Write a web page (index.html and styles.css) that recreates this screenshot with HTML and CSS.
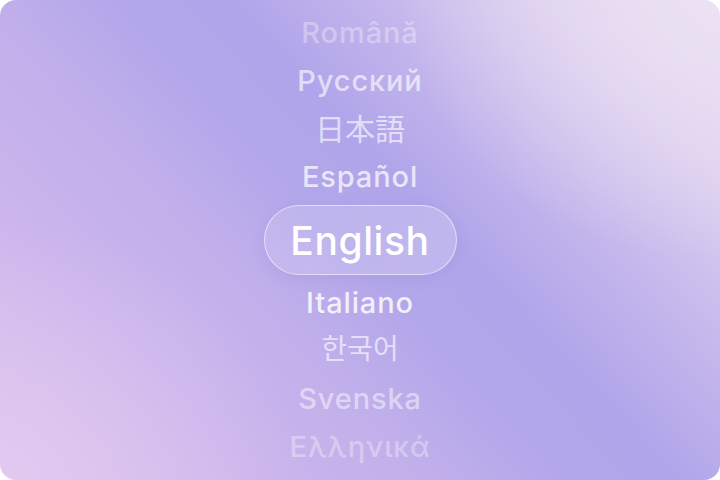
FILE: index.html
```html
<!DOCTYPE html>
<html lang="en">
<head>
<meta charset="utf-8">
<title>Language picker</title>
<link rel="stylesheet" href="styles.css">
</head>
<body>
<main class="card">
  <ul class="langs">
    <li class="lang o1">Română</li>
    <li class="lang o3">Русский</li>
    <li class="lang o3 cjk jp">日本語</li>
    <li class="lang o4">Español</li>
    <li class="lang current"><span class="pill">English</span></li>
    <li class="lang o5">Italiano</li>
    <li class="lang o3 cjk kr">한국어</li>
    <li class="lang o2">Svenska</li>
    <li class="lang o1">Ελληνικά</li>
  </ul>
</main>
</body>
</html>
```

FILE: styles.css
```css
* { box-sizing: border-box; }
html, body { margin: 0; padding: 0; background: #ffffff; }
body { width: 720px; height: 480px; overflow: hidden; }

.card {
  width: 720px;
  height: 480px;
  border-radius: 16px;
  overflow: hidden;
  display: flex;
  align-items: center;
  justify-content: center;
  background:
    radial-gradient(ellipse 320px 260px at 100% 0%, rgba(236,226,243,0.9), rgba(236,226,243,0) 100%),
    radial-gradient(ellipse 300px 260px at 0% 100%, rgba(226,202,240,0.85), rgba(226,202,240,0) 100%),
    linear-gradient(47deg, #dcc2ee 0%, #cbb5ec 22%, #c2b0eb 36%, #b3a7ea 48%, #b0a5ea 58%, #c6b8ec 72%, #dccfef 86%, #e8dcf1 100%);
  font-family: Inter, "Noto Sans", "Noto Sans CJK JP", "Noto Sans CJK KR", sans-serif;
}

.langs {
  list-style: none;
  margin: 0;
  padding: 0;
  display: flex;
  flex-direction: column;
  align-items: center;
}

.lang {
  height: 48px;
  line-height: 48px;
  font-size: 29px;
  font-weight: 450;
  color: #ffffff;
  letter-spacing: 0.03em;
  white-space: nowrap;
}

.cjk { font-family: "Noto Sans CJK JP", "Noto Sans CJK KR", sans-serif; font-weight: 400; letter-spacing: 0; }
.jp { font-size: 30px; line-height: 44px; }
.kr { font-size: 28px; line-height: 41px; font-family: "Noto Sans CJK KR", sans-serif; }

.o1 { opacity: 0.32; }
.o2 { opacity: 0.48; }
.o3 { opacity: 0.62; }
.o4 { opacity: 0.72; }
.o5 { opacity: 0.82; }

.current {
  height: 70px;
  margin: 4px 0;
  line-height: normal;
}

.pill {
  display: flex;
  align-items: center;
  justify-content: center;
  height: 70px;
  width: 193px;
  border-radius: 35px;
  font-size: 39px;
  font-weight: 450;
  letter-spacing: 0.015em;
  color: #ffffff;
  border: 1px solid rgba(255, 255, 255, 0.55);
  background: linear-gradient(100deg, rgba(255,255,255,0.14), rgba(255,255,255,0.2));
  box-shadow: 0 4px 14px rgba(120, 100, 200, 0.12);
}
```
